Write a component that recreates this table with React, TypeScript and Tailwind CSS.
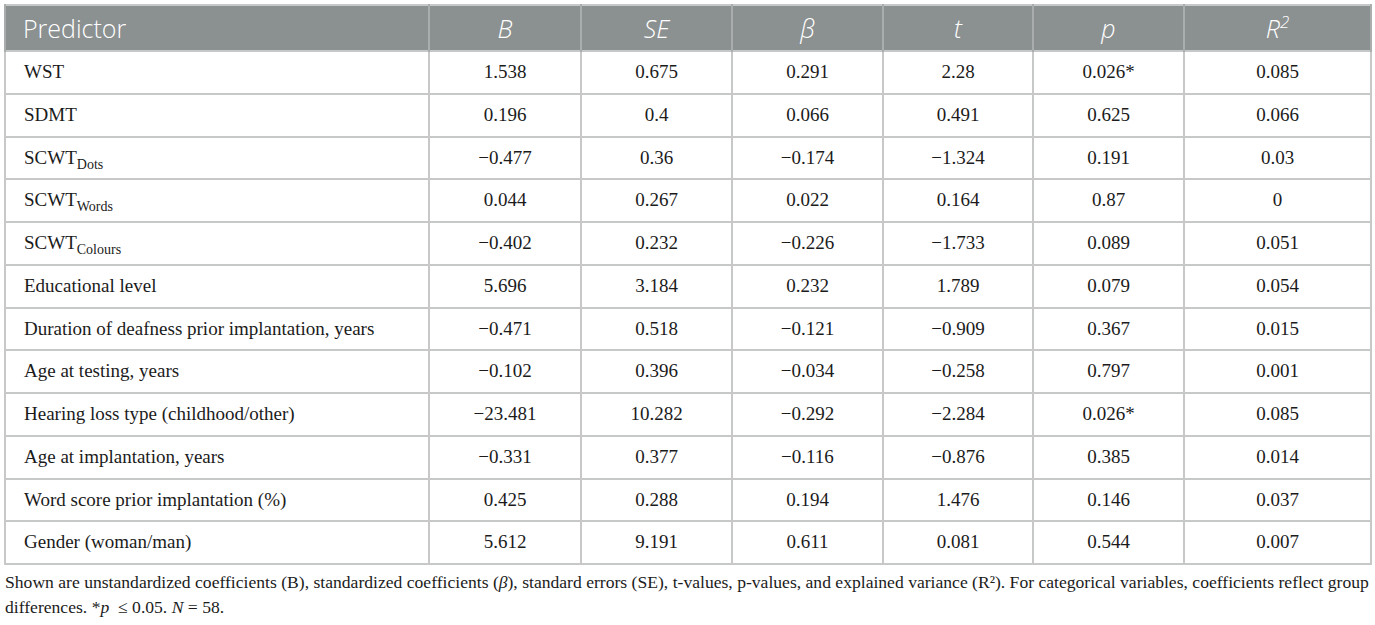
import React from "react";

type Row = {
  label: React.ReactNode;
  b: string;
  se: string;
  beta: string;
  t: string;
  p: string;
  r2: string;
};

const Sub = ({ base, sub }: { base: string; sub: string }) => (
  <span>
    {base}
    <span className="text-[14px] relative top-[5px] leading-none">{sub}</span>
  </span>
);

const rows: Row[] = [
  { label: "WST", b: "1.538", se: "0.675", beta: "0.291", t: "2.28", p: "0.026*", r2: "0.085" },
  { label: "SDMT", b: "0.196", se: "0.4", beta: "0.066", t: "0.491", p: "0.625", r2: "0.066" },
  { label: <Sub base="SCWT" sub="Dots" />, b: "−0.477", se: "0.36", beta: "−0.174", t: "−1.324", p: "0.191", r2: "0.03" },
  { label: <Sub base="SCWT" sub="Words" />, b: "0.044", se: "0.267", beta: "0.022", t: "0.164", p: "0.87", r2: "0" },
  { label: <Sub base="SCWT" sub="Colours" />, b: "−0.402", se: "0.232", beta: "−0.226", t: "−1.733", p: "0.089", r2: "0.051" },
  { label: "Educational level", b: "5.696", se: "3.184", beta: "0.232", t: "1.789", p: "0.079", r2: "0.054" },
  { label: "Duration of deafness prior implantation, years", b: "−0.471", se: "0.518", beta: "−0.121", t: "−0.909", p: "0.367", r2: "0.015" },
  { label: "Age at testing, years", b: "−0.102", se: "0.396", beta: "−0.034", t: "−0.258", p: "0.797", r2: "0.001" },
  { label: "Hearing loss type (childhood/other)", b: "−23.481", se: "10.282", beta: "−0.292", t: "−2.284", p: "0.026*", r2: "0.085" },
  { label: "Age at implantation, years", b: "−0.331", se: "0.377", beta: "−0.116", t: "−0.876", p: "0.385", r2: "0.014" },
  { label: "Word score prior implantation (%)", b: "0.425", se: "0.288", beta: "0.194", t: "1.476", p: "0.146", r2: "0.037" },
  { label: "Gender (woman/man)", b: "5.612", se: "9.191", beta: "0.611", t: "0.081", p: "0.544", r2: "0.007" },
];

const headCell = "border-x-2 border-[#a9adae] px-[18px] font-light text-center italic";
const cell = "border-2 border-[#c7c9c8] text-center";

export default function App() {
  return (
    <div className="bg-white pl-[4px] pt-[4px] w-[1375px]">
      <table className="w-[1366px] table-fixed border-collapse border-2 border-[#c7c9c8]">
        <colgroup>
          <col className="w-[424px]" />
          <col className="w-[152px]" />
          <col className="w-[151px]" />
          <col className="w-[151px]" />
          <col className="w-[150px]" />
          <col className="w-[151px]" />
          <col className="w-[187px]" />
        </colgroup>
        <thead>
          <tr className="h-[46px] bg-[#8b9091] text-white text-[25px] leading-none font-['Open_Sans','Lato',sans-serif]">
            <th className="border-x-2 border-[#a9adae] px-[17px] text-left font-light">Predictor</th>
            <th className={headCell}>B</th>
            <th className={headCell}>SE</th>
            <th className={headCell}>β</th>
            <th className={headCell}>t</th>
            <th className={headCell}>p</th>
            <th className={headCell}>
              R<span className="text-[17px] relative -top-[10px]">2</span>
            </th>
          </tr>
        </thead>
        <tbody className="font-['Liberation_Serif','DejaVu_Serif',serif] text-[19px] text-[#1b1b1b]">
          {rows.map((r, i) => (
            <tr key={i} className="h-[42.75px]">
              <td className="border-2 border-[#c7c9c8] px-[18px] text-left">{r.label}</td>
              <td className={cell}>{r.b}</td>
              <td className={cell}>{r.se}</td>
              <td className={cell}>{r.beta}</td>
              <td className={cell}>{r.t}</td>
              <td className={cell}>{r.p}</td>
              <td className={cell}>{r.r2}</td>
            </tr>
          ))}
        </tbody>
      </table>
      <p className="mt-[5px] pl-[1px] w-[1371px] font-['Liberation_Serif','DejaVu_Serif',serif] text-[17.6px] leading-[25px] text-[#1b1b1b]">
        Shown are unstandardized coefficients (B), standardized coefficients (<i>β</i>), standard errors (SE), t-values,
        p-values, and explained variance (R²). For categorical variables, coefficients reflect group differences.{" "}
        *<i>p</i>&nbsp; ≤ 0.05. <i>N</i> = 58.
      </p>
    </div>
  );
}
